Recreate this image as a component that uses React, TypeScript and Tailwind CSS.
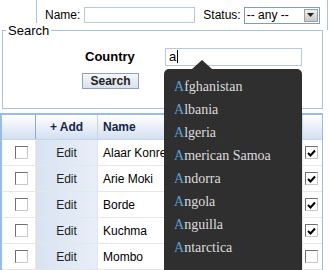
import React from "react";

const rows = [
  { name: "Alaar Konre", on: true },
  { name: "Arie Moki", on: true },
  { name: "Borde", on: true },
  { name: "Kuchma", on: true },
  { name: "Mombo", on: false },
];

const countries = [
  "Afghanistan",
  "Albania",
  "Algeria",
  "American Samoa",
  "Andorra",
  "Angola",
  "Anguilla",
  "Antarctica",
];

function Box({ checked }: { checked?: boolean }) {
  return (
    <div className="w-[13px] h-[13px] border border-[#707070] border-r-[#c8c8c8] border-b-[#c8c8c8] bg-white flex items-center justify-center">
      {checked && (
        <svg width="9" height="8" viewBox="0 0 9 8">
          <path d="M1 4 L3.5 6.5 L8 1.5" stroke="#000" strokeWidth="2" fill="none" />
        </svg>
      )}
    </div>
  );
}

export default function App() {
  return (
    <div
      className="relative w-[330px] h-[270px] overflow-hidden bg-white text-[12px] text-black"
      style={{ fontFamily: '"Liberation Sans", Arial, sans-serif' }}
    >
      {/* top filter panel */}
      <div className="ml-[36px] mr-[2px] h-[30px] border-l border-r border-[#a9c2de] flex items-center pl-[8px]">
        <span className="text-[12px]">Name:</span>
        <div className="ml-[4px] w-[111px] h-[16px] border border-[#b8c8d8] bg-white" />
        <span className="ml-[8px] text-[12px]">Status:</span>
        <div className="ml-[3px] w-[76px] h-[17px] border border-[#7f9db9] bg-white flex items-center">
          <span className="pl-[2px] flex-1 text-[12px] leading-none">-- any --</span>
          <div className="w-[14px] h-[13px] mr-[1px] bg-gradient-to-b from-[#f0f0f0] to-[#c8c8c8] border border-[#a0a0a0] flex items-center justify-center">
            <svg width="7" height="4" viewBox="0 0 7 4">
              <path d="M0 0 H7 L3.5 4 Z" fill="#222" />
            </svg>
          </div>
        </div>
      </div>

      {/* search fieldset */}
      <div className="relative ml-[2px] w-[321px] h-[79px] border border-[#a9c2de] pt-[16px]">
        <span className="absolute -top-[8px] left-[3px] bg-white px-[2px] text-[13px] leading-[16px]">Search</span>
        <div className="flex items-center">
          <span className="ml-[82px] w-[80px] font-bold text-[13px]">Country</span>
          <div className="w-[137px] h-[18px] border border-[#b8c8d8] bg-white flex items-center pl-[3px] text-[13px]">
            a<span className="ml-[1px] w-[1px] h-[13px] bg-black" />
          </div>
        </div>
        <div className="mt-[6px] ml-[79px] w-[57px] h-[16px] border border-[#8ea2bd] bg-gradient-to-b from-[#f4f7fb] to-[#d8e1ec] flex items-center justify-center font-bold text-[12px] text-[#222]">
          Search
        </div>
      </div>

      {/* grid */}
      <div className="mt-[4px] w-[323px] border-l-2 border-t-2 border-r border-b border-[#99bbe8]">
        <div className="flex h-[25px] bg-gradient-to-b from-[#ffffff] to-[#d3e0f1] border-b border-[#c5d5ea] font-bold text-[12px] text-[#15264a]">
          <div className="w-[34px] border-r border-[#8faad0]" />
          <div className="w-[62px] border-r border-[#c5d5ea] flex items-center justify-center">+ Add</div>
          <div className="flex-1 border-r border-[#c5d5ea] flex items-center pl-[5px]">Name</div>
          <div className="w-[19px]" />
        </div>
        {rows.map((r) => (
          <div key={r.name} className="flex h-[26px] border-b border-[#e6e6e6] text-[12px]">
            <div className="w-[34px] border-r border-[#e6e6e6] flex items-center pl-[13px]">
              <Box />
            </div>
            <div className="w-[62px] bg-gradient-to-r from-[#d8e3f2] to-[#e8eef8] border-r border-[#e0e6ef] flex items-center justify-center text-[#222]">
              Edit
            </div>
            <div className="flex-1 border-r border-[#e6e6e6] flex items-center pl-[5px]">{r.name}</div>
            <div className="w-[19px] flex items-center pl-[2px]">
              <Box checked={r.on} />
            </div>
          </div>
        ))}
      </div>

      {/* autocomplete popup */}
      <div className="absolute left-[164px] top-[60px] w-[138px]">
        <div className="flex justify-center w-[76px]">
          <svg width="20" height="9" viewBox="0 0 20 9" className="block">
            <path d="M0 9 L10 0 L20 9 Z" fill="#2f2f2f" />
          </svg>
        </div>
        <div
          className="bg-[#2f2f2f] rounded-[5px] pt-[6px] pb-[30px] pl-[10px] text-[14px] leading-[23px] text-[#dcdcdc]"
          style={{ fontFamily: '"Liberation Serif", "Times New Roman", serif' }}
        >
          {countries.map((c) => (
            <div key={c}>
              <span className="text-[#5aa2d6]">A</span>
              {c.slice(1)}
            </div>
          ))}
        </div>
      </div>
    </div>
  );
}
